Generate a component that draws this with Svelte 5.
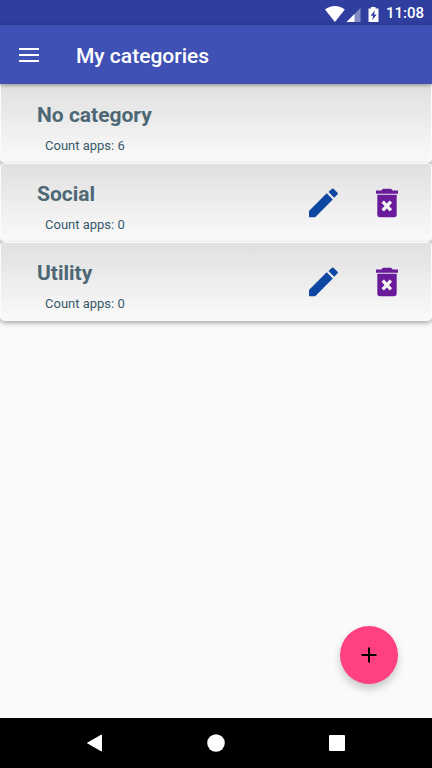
<script>
  const categories = [
    { name: 'No category', count: 6, editable: false },
    { name: 'Social', count: 0, editable: true },
    { name: 'Utility', count: 0, editable: true }
  ];
</script>

<div class="screen">
  <div class="status">
    <svg class="signals" width="56" height="18" viewBox="0 0 56 18" aria-hidden="true">
      <path d="M0 4.6C5.6-.2 14.2-.2 19.8 4.6L9.9 17Z" fill="#fff" />
      <path d="M21.500 17 35.500 3V17Z" fill="#fff" fill-opacity=".4" />
      <path d="M21.500 17 29.500 9V17Z" fill="#fff" />
      <path d="M46 2h4.500v1.500H53.500V17H43.500V3.500H46Z" fill="#fff" />
      <path d="M50 5.300 45.500 10.800H48.100L47.300 15 51.700 9.500H49.100Z" fill="#303f9f" />
    </svg>
    <span class="time">11:08</span>
  </div>

  <header>
    <button class="menu" aria-label="Open menu">
      <svg width="20" height="14" viewBox="0 0 20 14" aria-hidden="true">
        <path d="M0 1H20M0 7H20M0 13H20" stroke="#fff" stroke-width="2" />
      </svg>
    </button>
    <h1>My categories</h1>
  </header>

  <main>
    <ul>
      {#each categories as category}
        <li>
          <div class="info">
            <h2>{category.name}</h2>
            <p>Count apps: {category.count}</p>
          </div>
          {#if category.editable}
            <div class="actions">
              <button aria-label="Edit {category.name}">
                <svg width="38" height="38" viewBox="0 0 38 38" aria-hidden="true">
                  <path
                    fill="#0d47a1"
                    d="M24.500 8 28 4.700Q28.900 4 29.800 4.900L33.500 8.700Q34.300 9.700 33.500 10.600L30.200 13.800ZM5 27V33.200H11.200L28.800 15.500 22.700 9.300Z"
                  />
                </svg>
              </button>
              <button aria-label="Delete {category.name}">
                <svg width="38" height="38" viewBox="0 0 38 38" aria-hidden="true">
                  <path
                    fill="#6a1b9a"
                    d="M8 6.500H13.500Q14 4.800 15.500 4.800H22.500Q24 4.800 24.500 6.500H30V9.800H8ZM9.300 10.800H28.700V30.500Q28.700 33.200 26 33.200H12Q9.300 33.200 9.300 30.500Z"
                  />
                  <path d="M14.700 17.700 22.900 26.300M22.900 17.700 14.700 26.300" stroke="#f4f4f4" stroke-width="3.400" />
                </svg>
              </button>
            </div>
          {/if}
        </li>
      {/each}
    </ul>
    <button class="add" aria-label="Add category">
      <svg width="16" height="16" viewBox="0 0 16 16" aria-hidden="true">
        <path d="M8 .5V15.500M.5 8H15.500" stroke="#000" stroke-width="2" />
      </svg>
    </button>
  </main>

  <nav aria-label="System navigation">
    <button aria-label="Back">
      <svg width="20" height="20" viewBox="0 0 20 20" aria-hidden="true">
        <path d="M2.500 10 16.500 2V18Z" fill="#fff" stroke="#fff" stroke-linejoin="round" />
      </svg>
    </button>
    <button aria-label="Home">
      <svg width="20" height="20" viewBox="0 0 20 20" aria-hidden="true">
        <circle cx="10" cy="10" r="8.800" fill="#fff" />
      </svg>
    </button>
    <button aria-label="Recent apps">
      <svg width="20" height="20" viewBox="0 0 20 20" aria-hidden="true">
        <rect x="2" y="2" width="16" height="16" rx="1" fill="#fff" />
      </svg>
    </button>
  </nav>
</div>

<style>
  .screen {
    display: flex;
    flex-direction: column;
    min-height: 100vh;
    background: #fafafa;
    font-family: Roboto, sans-serif;
  }

  button {
    display: flex;
    align-items: center;
    justify-content: center;
    margin: 0;
    padding: 0;
    border: 0;
    background: none;
    cursor: pointer;
  }

  h1,
  h2,
  p,
  ul {
    margin: 0;
    padding: 0;
  }

  .status {
    display: flex;
    align-items: center;
    justify-content: flex-end;
    gap: 5px;
    box-sizing: border-box;
    height: 25px;
    padding: 2px 8px 0 0;
    background: #303f9f;
    color: #fff;
  }

  .time {
    font-size: 15px;
    line-height: 23px;
    font-weight: 500;
  }

  header {
    position: relative;
    z-index: 1;
    display: flex;
    align-items: center;
    gap: 18px;
    height: 59px;
    background: #3f51b5;
    box-shadow: 0 1px 4px rgba(0, 0, 0, 0.4);
    color: #fff;
  }

  .menu {
    width: 58px;
    height: 59px;
  }

  h1 {
    padding-top: 2px;
    font-size: 21px;
    line-height: 28px;
    font-weight: 500;
  }

  main {
    position: relative;
    flex: 1;
  }

  ul {
    list-style: none;
  }

  li {
    display: flex;
    align-items: center;
    justify-content: space-between;
    box-sizing: border-box;
    height: 79px;
    padding: 0 25px 0 36px;
    border: 1px solid #fcfcfc;
    border-radius: 5px;
    background: linear-gradient(#e0e0e0, #fafafa) padding-box;
    box-shadow: 0 2px 5px rgba(0, 0, 0, 0.35);
  }

  li:first-child {
    border-top-color: #e0e0e0;
    border-radius: 0 0 5px 5px;
  }

  .info {
    padding-top: 12px;
  }

  h2 {
    color: #4d6874;
    font-size: 21px;
    line-height: 32px;
    font-weight: 700;
  }

  p {
    padding-left: 8px;
    color: #37596b;
    font-size: 13px;
    line-height: 30px;
  }

  .actions {
    display: flex;
    gap: 26px;
  }

  .add {
    position: absolute;
    right: 34px;
    bottom: 34px;
    width: 58px;
    height: 58px;
    border-radius: 50%;
    background: #ff4081;
    box-shadow: 0 5px 8px rgba(0, 0, 0, 0.2);
  }

  nav {
    display: flex;
    justify-content: center;
    gap: 63px;
    height: 50px;
    background: #000;
  }

  nav button {
    width: 58px;
  }
</style>
